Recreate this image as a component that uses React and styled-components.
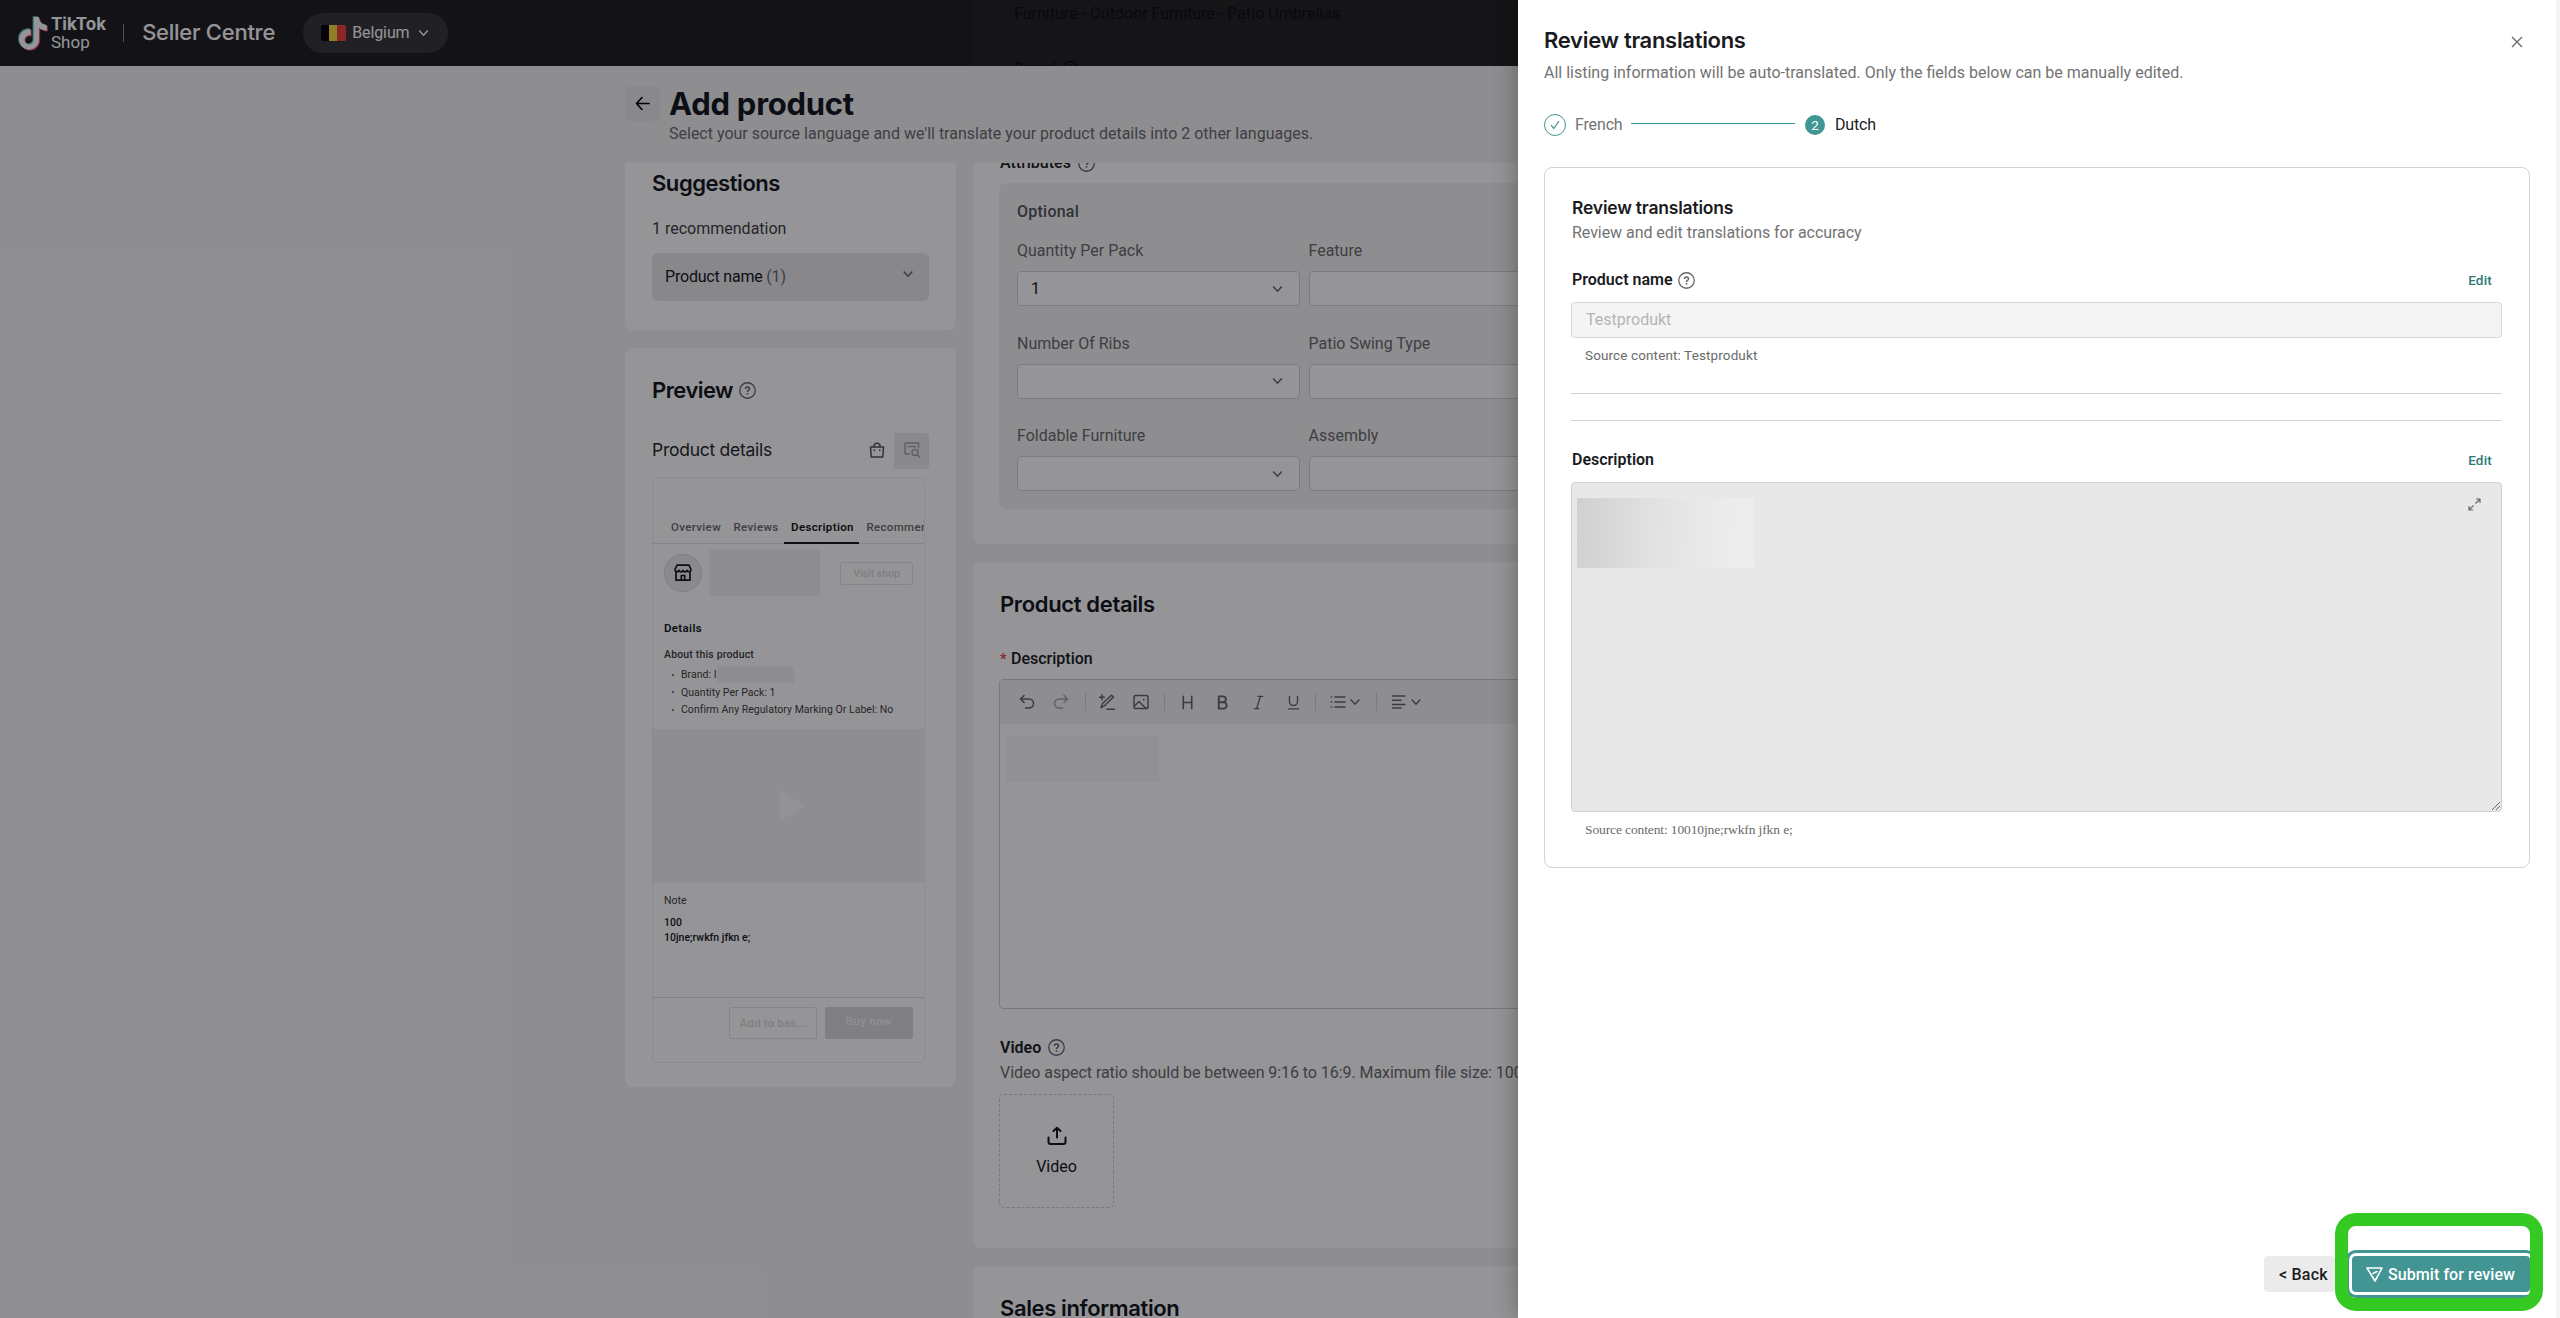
import React from "react";
import styled, { createGlobalStyle } from "styled-components";

const GlobalStyle = createGlobalStyle`
  * {
    box-sizing: border-box;
  }
  body {
    margin: 0;
    overflow: hidden;
    font-family: Roboto, "Liberation Sans", sans-serif;
    font-size: 16px;
    line-height: 24px;
    color: #161823;
  }
  svg {
    display: block;
    flex: none;
  }
`;

const Page = styled.div`
  position: relative;
  height: 1318px;
  overflow: hidden;
  background-color: #f4f4f5;
`;

/* header */

const Header = styled.header`
  position: relative;
  display: flex;
  align-items: center;
  height: 66px;
  padding-left: 18px;
  background-color: #222225;
  color: #fff;
  overflow: hidden;
`;

const Brand = styled.div`
  margin-left: 3px;
  padding-top: 1px;
`;

const BrandName = styled.div`
  font-family: Inter, sans-serif;
  font-size: 17px;
  font-weight: 700;
  line-height: 16px;
`;

const BrandSub = styled.div`
  padding-top: 1px;
  font-size: 17px;
  line-height: 18px;
`;

const HeaderDivider = styled.div`
  width: 1px;
  height: 18px;
  margin: 0 18px 0 17px;
  background-color: #8a8a90;
`;

const SellerCentre = styled.div`
  width: 135px;
  padding-bottom: 2px;
  white-space: nowrap;
  font-family: Inter, sans-serif;
  font-size: 22px;
  font-weight: 500;
  letter-spacing: -0.26px;
`;

const Region = styled.div`
  display: flex;
  align-items: center;
  gap: 6px;
  height: 40px;
  width: 145px;
  margin-left: 26px;
  padding-left: 18px;
  border-radius: 20px;
  background-color: #39393d;
  letter-spacing: -0.1px;
  svg {
    margin-left: 2px;
  }
`;

const Flag = styled.div`
  width: 25px;
  height: 16px;
  border-radius: 2px;
  background: linear-gradient(90deg, #0a0a0c 33%, #f5d840 33% 66%, #ee4444 66%);
`;

const HeaderGhost = styled.div`
  position: absolute;
  left: 973px;
  top: 0;
  right: 0;
  height: 66px;
  padding: 2px 0 0 41px;
  background-color: rgba(255, 255, 255, 0.012);
  color: #101012;
  white-space: nowrap;
`;

const GhostLabel = styled.div`
  display: flex;
  align-items: center;
  gap: 6px;
  margin-top: 31px;
  font-weight: 500;
`;

/* page title */

const TitleBar = styled.div`
  display: flex;
  height: 97px;
  padding: 20px 0 0 625px;
`;

const BackButton = styled.button`
  display: flex;
  align-items: center;
  justify-content: center;
  width: 35px;
  height: 35px;
  margin-right: 9px;
  padding: 0;
  border: none;
  border-radius: 5px;
  background-color: #ebebed;
`;

const PageTitle = styled.h1`
  margin: 0;
  font-family: Inter, sans-serif;
  font-size: 31px;
  font-weight: 700;
  line-height: 36px;
  letter-spacing: -0.25px;
`;

const PageSubtitle = styled.p`
  margin: 0;
  color: #6b6b70;
`;

/* columns */

const Columns = styled.div`
  display: flex;
  gap: 17px;
  height: 1155px;
  padding-left: 625px;
  overflow: hidden;
`;

const Column = styled.div`
  display: flex;
  flex-direction: column;
  gap: 18px;
  flex: ${({ $side }) => ($side ? "0 0 331px" : "1 0 1000px")};
`;

const Card = styled.section`
  flex: none;
  height: ${({ $height }) => $height}px;
  padding: ${({ $pad }) => $pad}px 27px 0 27px;
  border-radius: ${({ $cut }) => ($cut ? "0 0 8px 8px" : "8px")};
  background-color: #fff;
`;

const CardTitle = styled.h2`
  display: flex;
  align-items: center;
  gap: 6px;
  margin: 0;
  font-family: Inter, sans-serif;
  font-size: 22px;
  font-weight: 600;
  line-height: 30px;
  letter-spacing: ${({ $ls }) => $ls || -0.3}px;
`;

const Recommendation = styled.div`
  margin-top: 19px;
  color: #3f3f45;
`;

const SuggestionItem = styled.div`
  display: flex;
  align-items: center;
  justify-content: space-between;
  width: 277px;
  height: 48px;
  margin-top: 12px;
  padding: 0 16px 0 13px;
  border-radius: 6px;
  background-color: #e9e9eb;
  letter-spacing: -0.2px;
  span {
    color: #6b6b70;
  }
  svg {
    margin-top: -6px;
  }
`;

/* preview */

const PreviewHead = styled.div`
  display: flex;
  align-items: center;
  height: 36px;
  margin-top: 28px;
  color: #2a2a30;
  h3 {
    flex: 1;
    margin: 0;
    padding-bottom: 2px;
    font-family: Inter, sans-serif;
    font-size: 17.5px;
    font-weight: 400;
    letter-spacing: -0.26px;
  }
`;

const ViewToggle = styled.div`
  display: flex;
  align-items: center;
  justify-content: center;
  width: 35px;
  height: 36px;
  padding-bottom: 3px;
  border-radius: 0 4px 4px 0;
  background-color: ${({ $active }) => ($active ? "#ececee" : "transparent")};
  color: ${({ $active }) => ($active ? "#a3a3a7" : "#55555b")};
`;

const Phone = styled.div`
  width: 273px;
  height: 586px;
  margin-top: 8px;
  border: 1px solid #eeeef0;
  border-radius: 5px;
  overflow: hidden;
  font-size: 10.5px;
  line-height: 16px;
`;

const Tabs = styled.div`
  display: flex;
  align-items: flex-end;
  height: 66px;
  padding-left: 11px;
  border-bottom: 1px solid #e4e4e6;
  white-space: nowrap;
`;

const Tab = styled.div`
  flex: none;
  padding: 0 5.5px 7px 7px;
  margin-bottom: -1px;
  border-bottom: 2px solid ${({ $active }) => ($active ? "#161823" : "transparent")};
  color: ${({ $active }) => ($active ? "#161823" : "#6b6b70")};
  font-size: 11.5px;
  font-weight: ${({ $active }) => ($active ? 600 : 500)};
  letter-spacing: 0.35px;
`;

const ShopRow = styled.div`
  display: flex;
  align-items: center;
  height: 58px;
  padding-left: 11px;
  button {
    margin-left: 20px;
  }
`;

const ShopAvatar = styled.div`
  display: flex;
  align-items: center;
  justify-content: center;
  width: 38px;
  height: 38px;
  margin-right: 7px;
  border: 1px solid #d9d9db;
  border-radius: 50%;
  background-color: #ededef;
`;

const Redacted = styled.div`
  flex: none;
  width: ${({ $w }) => $w}px;
  height: ${({ $h }) => $h}px;
  background-color: ${({ $faint }) => ($faint ? "#f9f9fa" : "#f4f4f5")};
`;

const PhoneButton = styled.button`
  width: ${({ $w }) => $w}px;
  height: ${({ $h }) => $h}px;
  padding: 0 0 ${({ $lift }) => $lift || 0}px;
  border: 1px solid ${({ $filled }) => ($filled ? "#dcdcde" : "#e6e6e8")};
  border-radius: 2px;
  background-color: ${({ $filled }) => ($filled ? "#dcdcde" : "transparent")};
  color: ${({ $filled }) => ($filled ? "#f6f6f8" : "#dadadc")};
  font: 500 ${({ $size }) => $size}px Roboto, sans-serif;
  letter-spacing: ${({ $ls }) => $ls || 0}px;
`;

const DetailsTitle = styled.div`
  margin: 17px 0 0 11px;
  font-size: 11.5px;
  font-weight: 600;
  line-height: 18px;
  letter-spacing: 0.34px;
`;

const AboutTitle = styled.div`
  margin: 10px 0 0 11px;
  color: #3f3f45;
  font-weight: 500;
  letter-spacing: 0.17px;
`;

const AboutList = styled.ul`
  margin: 3px 0 0;
  padding: 0;
  list-style: none;
  color: #3f3f45;
  line-height: 17.5px;
  li {
    display: flex;
    align-items: center;
    height: 17.5px;
    padding-left: 19px;
    white-space: nowrap;
    letter-spacing: 0.03px;
  }
  li::before {
    content: "";
    width: 2px;
    height: 2px;
    margin-right: 7px;
    border-radius: 50%;
    background-color: #55555b;
  }
`;

const PhoneVideo = styled.div`
  display: flex;
  align-items: center;
  justify-content: center;
  height: 153px;
  margin-top: 10px;
  padding-left: 6px;
  background-color: #f3f3f4;
`;

const Note = styled.div`
  height: 115px;
  padding: 11px 0 0 11px;
  color: #3f3f45;
  div {
    margin-top: 6px;
    color: #161823;
    font-weight: 500;
    line-height: 15px;
  }
`;

const PhoneFooter = styled.div`
  display: flex;
  justify-content: flex-end;
  gap: 8px;
  padding: 9px 11px 0 0;
  border-top: 1px solid #dedee0;
`;

/* attributes */

const SectionLabel = styled.div`
  display: flex;
  align-items: center;
  gap: 7px;
  margin-top: ${({ $mt }) => $mt}px;
  font-weight: ${({ $weight }) => $weight || 500};
  color: #202026;
`;

const Required = styled.span`
  width: 7px;
  margin-right: -3px;
  color: #f04438;
  line-height: 20px;
  font-size: 15px;
`;

const OptionalBlock = styled.div`
  height: 326px;
  margin: 8px 0 0 -1px;
  padding: 17px 18px 0;
  border-radius: 8px;
  background-color: #f4f4f5;
`;

const OptionalTitle = styled.div`
  color: #55555b;
  font-weight: 500;
  letter-spacing: 0.24px;
`;

const FieldGrid = styled.div`
  display: grid;
  grid-template-columns: 282.5px 282.5px;
  gap: 25.5px 9px;
  margin-top: 15px;
  color: #6b6b70;
`;

const Select = styled.div`
  display: flex;
  align-items: center;
  justify-content: space-between;
  height: 35px;
  margin-top: 8px;
  padding: 0 16px 0 13px;
  border: 1px solid #d5d5d8;
  border-radius: 4px;
  background-color: #fff;
  color: #161823;
`;

/* editor */

const Editor = styled.div`
  height: 329.5px;
  margin: 8px 0 0 -1px;
  border: 1px solid #d0d0d3;
  border-radius: 4px;
  overflow: hidden;
`;

const Toolbar = styled.div`
  display: flex;
  align-items: center;
  height: 44px;
  padding-left: 18px;
  background-color: #f4f4f5;
  color: #66666c;
`;

const Tool = styled.span`
  display: flex;
  flex: none;
  align-items: center;
  justify-content: center;
  width: ${({ $w }) => $w}px;
  opacity: ${({ $off }) => ($off ? 0.55 : 1)};
`;

const ToolDivider = styled.span`
  width: 1px;
  height: 18px;
  margin-left: ${({ $gap }) => $gap || 0}px;
  background-color: #d5d5d8;
`;

const ToolMenu = styled.span`
  display: flex;
  align-items: center;
  gap: 4px;
  padding-left: 14px;
`;

const EditorBody = styled.div`
  padding: 12px 6px;
`;

const VideoHint = styled.div`
  margin-top: 1px;
  color: #6b6b70;
  white-space: nowrap;
  letter-spacing: -0.06px;
`;

const Upload = styled.div`
  display: flex;
  flex-direction: column;
  align-items: center;
  gap: 9px;
  width: 115px;
  height: 114px;
  margin: 9px 0 0 -1px;
  padding-top: 31px;
  border: 1px dashed #cfcfd2;
  border-radius: 5px;
`;

const Mask = styled.div`
  position: absolute;
  inset: 0;
  background-color: rgba(0, 0, 4, 0.415);
`;

/* drawer */

const Drawer = styled.aside`
  position: absolute;
  top: 0;
  right: 0;
  bottom: 0;
  display: flex;
  flex-direction: column;
  width: 1042px;
  padding: 25px 26px 26px;
  border-right: 4px solid #f4f4f4;
  background-color: #fff;
  color: #1b1b1f;
  box-shadow: 0 0 24px rgba(0, 0, 0, 0.32);
`;

const DrawerHead = styled.div`
  display: flex;
  justify-content: space-between;
  height: 30px;
  padding-right: 7px;
  svg {
    margin-top: 11px;
  }
`;

const DrawerSub = styled.div`
  margin-top: 6px;
  color: #737373;
`;

const Steps = styled.div`
  display: flex;
  align-items: center;
  height: 22px;
  margin-top: 29px;
`;

const StepDot = styled.span`
  display: flex;
  align-items: center;
  justify-content: center;
  width: ${({ $done }) => ($done ? 22 : 20)}px;
  height: ${({ $done }) => ($done ? 22 : 20)}px;
  border: ${({ $done }) => ($done ? "1px solid #459793" : "none")};
  border-radius: 50%;
  background-color: ${({ $done }) => ($done ? "#fff" : "#409693")};
  color: ${({ $done }) => ($done ? "#409693" : "#fff")};
  font-size: 13.5px;
`;

const StepLabel = styled.span`
  width: 48px;
  margin-left: ${({ $done }) => ($done ? 9 : 10)}px;
  letter-spacing: -0.15px;
  color: ${({ $done }) => ($done ? "#737373" : "#1b1b1f")};
`;

const StepLine = styled.span`
  width: 164px;
  height: 1px;
  margin: -3px 10px 0 8px;
  background-color: #409693;
`;

const ReviewCard = styled.section`
  height: 701px;
  margin-top: 31px;
  padding: 27px 27px 0 26px;
  border: 1px solid #d3d3d3;
  border-radius: 8px;
`;

const ReviewTitle = styled.h3`
  margin: 0 0 0 1px;
  font-family: Inter, sans-serif;
  font-size: 17.5px;
  font-weight: 600;
  line-height: 26px;
  letter-spacing: -0.2px;
`;

const ReviewSub = styled.div`
  margin-left: 1px;
  color: #737373;
  letter-spacing: -0.05px;
`;

const FieldHead = styled.div`
  display: flex;
  align-items: center;
  height: 24px;
  margin-top: ${({ $mt }) => $mt}px;
  padding: 0 10px 0 1px;
  font-weight: 600;
  svg {
    margin-left: 5px;
  }
`;

const EditLink = styled.a`
  margin-left: auto;
  color: #2b7a78;
  font-size: 13.5px;
  font-weight: 500;
  letter-spacing: 0.2px;
`;

const Input = styled.div`
  height: 36px;
  margin-top: 10px;
  padding: 5px 14px;
  border: 1px solid #d8d8d8;
  border-radius: 4px;
  background-color: #f4f4f4;
  color: #b5b5b5;
`;

const Source = styled.div`
  margin-left: 14px;
  padding-top: ${({ $serif }) => ($serif ? 8 : 7)}px;
  font-family: ${({ $serif }) => ($serif ? '"Liberation Serif", serif' : "Roboto, sans-serif")};
  font-size: 13.5px;
  line-height: 20px;
  letter-spacing: ${({ $serif }) => ($serif ? -0.12 : 0.12)}px;
  color: #6a6a6a;
`;

const Rule = styled.div`
  height: 1px;
  margin-top: ${({ $mt }) => $mt}px;
  background-color: #d3d3d3;
`;

const TextArea = styled.div`
  display: flex;
  justify-content: space-between;
  position: relative;
  height: 330px;
  margin-top: 10px;
  padding: 15px 20px 0 5px;
  border: 1px solid #d0d0d0;
  border-radius: 4px;
  background-color: #e8e8e8;
`;

const GradientPatch = styled.div`
  width: 177px;
  height: 70px;
  background: linear-gradient(94deg, #d0d0d0, #e2e2e2 45%, #eaeaea 75%, #eeeeee);
`;

const Resizer = styled.div`
  position: absolute;
  right: 0;
  bottom: 0;
`;

const Footer = styled.div`
  display: flex;
  justify-content: flex-end;
  gap: 17px;
  margin-top: auto;
`;

const FooterButton = styled.button`
  display: flex;
  align-items: center;
  height: 36px;
  border: none;
  border-radius: 4px;
  background-color: ${({ $primary }) => ($primary ? "#429593" : "#ebebeb")};
  color: ${({ $primary }) => ($primary ? "#fff" : "#1b1b1f")};
  box-shadow: ${({ $primary }) => ($primary ? "0 0 0 3px #fff, 0 0 0 6px #429593" : "none")};
  padding: 0 ${({ $primary }) => ($primary ? "15px 0 14px" : "7px 0 15px")};
  gap: 5px;
  font: 500 16px Roboto, sans-serif;
  letter-spacing: ${({ $primary }) => ($primary ? 0.08 : 0.25)}px;
`;

const Highlight = styled.div`
  position: absolute;
  right: 17px;
  bottom: 7px;
  width: 208px;
  height: 98px;
  border: 13px solid #35c924;
  border-radius: 21px;
`;

const Icon = ({ size = 16, stroke = 1.3, children, box = 16 }) => (
  <svg
    width={size}
    height={size}
    viewBox={`0 0 ${box} ${box}`}
    fill="none"
    stroke="currentColor"
    strokeWidth={stroke}
    strokeLinecap="round"
    strokeLinejoin="round"
  >
    {children}
  </svg>
);

const HelpIcon = ({ color = "#66666c" }) => (
  <svg width="17" height="17" viewBox="0 0 16 16" fill="none" stroke={color} strokeWidth="1.2">
    <circle cx="8" cy="8" r="7.3" />
    <path d="M6.1 6.6c0-1.1.8-1.8 1.9-1.8s1.9.7 1.9 1.7c0 1.4-1.9 1.4-1.9 2.8" strokeWidth="1.4" />
    <path d="M8 10.4v1.5" strokeWidth="1.5" />
  </svg>
);

const ChevronDown = ({ w = 10, color = "#66666c" }) => (
  <svg width={w} height="8" viewBox="0 0 10 8" fill="none" stroke={color} strokeWidth="1.5">
    <path d="M.7 1.6L5 6.2l4.3-4.6" />
  </svg>
);

const NOTE_PATH =
  "M12.525.02c1.31-.02 2.61-.01 3.91-.02.08 1.53.63 3.09 1.75 4.17 1.12 1.11 2.7 1.62 4.24 1.79v4.03c-1.44-.05-2.89-.35-4.2-.97-.57-.26-1.1-.59-1.62-.93-.01 2.92.01 5.84-.02 8.75-.08 1.4-.54 2.79-1.35 3.94-1.31 1.92-3.58 3.17-5.91 3.21-1.43.08-2.86-.31-4.08-1.03-2.02-1.19-3.44-3.37-3.65-5.71-.02-.5-.03-1-.01-1.49.18-1.9 1.12-3.72 2.58-4.96 1.66-1.44 3.98-2.13 6.15-1.72.02 1.48-.04 2.96-.04 4.44-.99-.32-2.15-.23-3.02.37-.63.41-1.11 1.04-1.36 1.75-.21.51-.15 1.07-.14 1.61.24 1.64 1.82 3.02 3.5 2.87 1.12-.01 2.19-.66 2.77-1.61.19-.33.4-.67.41-1.06.1-1.79.06-3.57.07-5.36.01-4.03-.01-8.05.02-12.07z";

const TikTokLogo = () => (
  <svg width="30" height="35" viewBox="0.7 -0.8 22.6 25.8" preserveAspectRatio="none">
    <path d={NOTE_PATH} fill="#5fc4c6" transform="translate(-.8 -.7)" />
    <path d={NOTE_PATH} fill="#d8475f" transform="translate(.8 .7)" />
    <path d={NOTE_PATH} fill="#fff" />
  </svg>
);

const fields = [
  ["Quantity Per Pack", "1"],
  ["Feature", ""],
  ["Number Of Ribs", ""],
  ["Patio Swing Type", ""],
  ["Foldable Furniture", ""],
  ["Assembly", ""],
];

const SidePanel = () => (
  <Column $side>
    <Card $height={167} $pad={5} $cut>
      <CardTitle $ls={-0.44}>Suggestions</CardTitle>
      <Recommendation>1 recommendation</Recommendation>
      <SuggestionItem>
        <div>
          Product name <span>(1)</span>
        </div>
        <ChevronDown />
      </SuggestionItem>
    </Card>
    <Card $height={739} $pad={27}>
      <CardTitle $ls={-0.55}>
        Preview <HelpIcon />
      </CardTitle>
      <PreviewHead>
        <h3>Product details</h3>
        <ViewToggle>
          <Icon stroke={1.5}>
            <path d="M1.5 5h13l-.7 10H2.2zM4.8 5c0-5 6.4-5 6.4 0M5.3 8v.6M10.7 8v.6" />
          </Icon>
        </ViewToggle>
        <ViewToggle $active>
          <Icon stroke={1.5}>
            <path d="M14.5 6V1H1v11h4.5M4 4.5h7.5M13.5 12.8l2 2.2" />
            <circle cx="11" cy="10.5" r="3" />
          </Icon>
        </ViewToggle>
      </PreviewHead>
      <Phone>
        <Tabs>
          <Tab>Overview</Tab>
          <Tab>Reviews</Tab>
          <Tab $active>Description</Tab>
          <Tab>Recommendations</Tab>
        </Tabs>
        <ShopRow>
          <ShopAvatar>
            <Icon size={18} box={18} stroke={1.7}>
              <path d="M2 8v8.2h14V8M3 1.2h12l2 4.3c0 2.7-3.2 2.9-4 .9-.8 2-3.2 2-4 0-.8 2-3.2 2-4 0-.8 2-4 1.8-4-.9zM7.3 16v-4.5h3.4V16" />
            </Icon>
          </ShopAvatar>
          <Redacted $w={111} $h={46} />
          <PhoneButton $w={73} $h={23} $size={10.5}>
            Visit shop
          </PhoneButton>
        </ShopRow>
        <DetailsTitle>Details</DetailsTitle>
        <AboutTitle>About this product</AboutTitle>
        <AboutList>
          <li>
            Brand: I<Redacted $w={77} $h={17} />
          </li>
          <li>Quantity Per Pack: 1</li>
          <li>Confirm Any Regulatory Marking Or Label: No</li>
        </AboutList>
        <PhoneVideo>
          <svg width="26" height="31" viewBox="0 0 26 31">
            <path d="M1 1.5Q1 .2 2.2.9L25 14.5q1 1 0 1.8L2.2 30Q1 30.7 1 29.5z" fill="#fcfcfc" />
          </svg>
        </PhoneVideo>
        <Note>
          Note
          <div>
            100
            <br />
            10jne;rwkfn jfkn e;
          </div>
        </Note>
        <PhoneFooter>
          <PhoneButton $w={88} $h={32} $size={11.5} $ls={0.18}>
            Add to bas...
          </PhoneButton>
          <PhoneButton $w={88} $h={32} $size={11.5} $ls={0.41} $lift={3} $filled>
            Buy now
          </PhoneButton>
        </PhoneFooter>
      </Phone>
    </Card>
  </Column>
);

const EditorToolbar = () => (
  <Toolbar>
    <Tool $w={18}>
      <Icon stroke={1.5}>
        <path d="M5 1.5L1.5 5 5 8.5M1.5 5H10a4.3 4.3 0 0 1 0 9H6.5" />
      </Icon>
    </Tool>
    <Tool $w={49} $off>
      <Icon stroke={1.5}>
        <path d="M11 1.5L14.500 5 11 8.5M14.5 5H6a4.3 4.3 0 0 0 0 9h3.5" />
      </Icon>
    </Tool>
    <ToolDivider />
    <Tool $w={42}>
      <Icon stroke={1.5}>
        <path d="M2 13.5L3.5 9.5 12.5 1.2l2 1.8L5.5 11.8 2 13.5M8 15.3h7.5M3 .8v5M.6 3.3h4.8" />
      </Icon>
    </Tool>
    <Tool $w={26}>
      <Icon stroke={1.5}>
        <rect x="1" y="1.5" width="14" height="13" rx="1.8" />
        <path d="M1.5 12L6 7.5l6.5 6.5M10.8 5.3v.6" />
      </Icon>
    </Tool>
    <ToolDivider $gap={10} />
    <Tool $w={44}>
      <Icon size={15} stroke={1.7}>
        <path d="M3.500 1.5v13M12.5 1.5v13M3.5 8h9" />
      </Icon>
    </Tool>
    <Tool $w={26}>
      <Icon size={15} stroke={2}>
        <path d="M4 1.5h4.5a3 3 0 0 1 0 6.2H4zM4 7.700h5a3.3 3.3 0 0 1 0 6.8H4z" />
      </Icon>
    </Tool>
    <Tool $w={46}>
      <Icon size={15} stroke={1.5}>
        <path d="M7.500 1.5h5M3.5 14.5h5M10 1.5l-4 13" />
      </Icon>
    </Tool>
    <Tool $w={25}>
      <Icon size={15} stroke={1.5}>
        <path d="M3.7 1.5v5.5a4.3 4.3 0 0 0 8.6 0V1.5M2.5 14.8h11" />
      </Icon>
    </Tool>
    <ToolDivider $gap={9} />
    <ToolMenu>
      <Icon stroke={1.5}>
        <path d="M5 3h10M5 8h10M5 13h10M1.2 3h.4M1.2 8h.4M1.2 13h.4" />
      </Icon>
      <ChevronDown />
    </ToolMenu>
    <ToolDivider $gap={16} />
    <ToolMenu>
      <Icon stroke={1.5}>
        <path d="M1.5 2h12.500M1.500 6.200h8.500M1.500 10.400h12.500M1.500 14h8.500" />
      </Icon>
      <ChevronDown />
    </ToolMenu>
  </Toolbar>
);

const MainPanel = () => (
  <Column>
    <Card $height={381} $pad={0} $cut>
      <SectionLabel $mt={-12}>
        Attributes <HelpIcon />
      </SectionLabel>
      <OptionalBlock>
        <OptionalTitle>Optional</OptionalTitle>
        <FieldGrid>
          {fields.map(([label, value]) => (
            <div key={label}>
              {label}
              <Select>
                <span>{value}</span>
                <ChevronDown w={11} />
              </Select>
            </div>
          ))}
        </FieldGrid>
      </OptionalBlock>
    </Card>
    <Card $height={686} $pad={27}>
      <CardTitle $ls={-0.35}>Product details</CardTitle>
      <SectionLabel $mt={28}>
        <Required>*</Required>Description
      </SectionLabel>
      <Editor>
        <EditorToolbar />
        <EditorBody>
          <Redacted $w={153} $h={46} $faint />
        </EditorBody>
      </Editor>
      <SectionLabel $mt={27} $weight={600}>
        Video <HelpIcon />
      </SectionLabel>
      <VideoHint>
        Video aspect ratio should be between 9:16 to 16:9. Maximum file size: 100 MB.
      </VideoHint>
      <Upload>
        <Icon size={20} box={20} stroke={2}>
          <path d="M10 11.5V2M6.5 5L10 1.7 13.5 5M1.5 11.5V16q0 2 2 2h13q2 0 2-2v-4.5" />
        </Icon>
        Video
      </Upload>
    </Card>
    <Card $height={200} $pad={27}>
      <CardTitle $ls={-0.37}>Sales information</CardTitle>
    </Card>
  </Column>
);

const TranslationDrawer = () => (
  <Drawer>
    <DrawerHead>
      <CardTitle>Review translations</CardTitle>
      <svg width="12" height="12" viewBox="0 0 12 12" stroke="#66666c" strokeWidth="1.3">
        <path d="M1 1l10 10M11 1L1 11" />
      </svg>
    </DrawerHead>
    <DrawerSub>
      All listing information will be auto-translated. Only the fields below can be manually edited.
    </DrawerSub>
    <Steps>
      <StepDot $done>
        <svg width="10" height="10" viewBox="0 0 10 10" fill="none" stroke="currentColor">
          <path d="M1 5.2l2.8 3.3L9 1.2" strokeWidth="1.2" />
        </svg>
      </StepDot>
      <StepLabel $done>French</StepLabel>
      <StepLine />
      <StepDot>2</StepDot>
      <StepLabel>Dutch</StepLabel>
    </Steps>
    <ReviewCard>
      <ReviewTitle>Review translations</ReviewTitle>
      <ReviewSub>Review and edit translations for accuracy</ReviewSub>
      <FieldHead $mt={23}>
        Product name <HelpIcon />
        <EditLink>Edit</EditLink>
      </FieldHead>
      <Input>Testprodukt</Input>
      <Source>Source content: Testprodukt</Source>
      <Rule $mt={28} />
      <Rule $mt={26} />
      <FieldHead $mt={27}>
        Description
        <EditLink>Edit</EditLink>
      </FieldHead>
      <TextArea>
        <GradientPatch />
        <svg width="13" height="13" viewBox="0 0 13 13" fill="none" stroke="#66666c" strokeWidth="1.2">
          <path d="M8 1h4v4M12 1L7.5 5.5M5 12H1V8M1 12l4.5-4.5" />
        </svg>
        <Resizer>
          <svg width="10" height="10" viewBox="0 0 10 10" stroke="#66666c">
            <path d="M1 9L9 1M5 9l4-4" />
          </svg>
        </Resizer>
      </TextArea>
      <Source $serif>Source content: 10010jne;rwkfn jfkn e;</Source>
    </ReviewCard>
    <Footer>
      <FooterButton>&lt; Back</FooterButton>
      <FooterButton $primary>
        <Icon size={17} box={17} stroke={1.6}>
          <path d="M1 2h15L9 15zM7 7.500L11 5.5" />
        </Icon>
        Submit for review
      </FooterButton>
    </Footer>
  </Drawer>
);

const App = () => {
  return (
    <Page>
      <GlobalStyle />
      <Header>
        <HeaderGhost>
          Furniture - Outdoor Furniture - Patio Umbrellas
          <GhostLabel>
            Brand <HelpIcon color="#101012" />
          </GhostLabel>
        </HeaderGhost>
        <TikTokLogo />
        <Brand>
          <BrandName>TikTok</BrandName>
          <BrandSub>Shop</BrandSub>
        </Brand>
        <HeaderDivider />
        <SellerCentre>Seller Centre</SellerCentre>
        <Region>
          <Flag />
          Belgium
          <ChevronDown w={11} color="#fff" />
        </Region>
      </Header>
      <TitleBar>
        <BackButton>
          <Icon size={15} box={15} stroke={1.6}>
            <path d="M14 7.5H1.5M7 1.5l-5.5 6 5.5 6" />
          </Icon>
        </BackButton>
        <div>
          <PageTitle>Add product</PageTitle>
          <PageSubtitle>
            Select your source language and we'll translate your product details into 2 other languages.
          </PageSubtitle>
        </div>
      </TitleBar>
      <Columns>
        <SidePanel />
        <MainPanel />
      </Columns>
      <Mask />
      <TranslationDrawer />
      <Highlight />
    </Page>
  );
};

export default App;
